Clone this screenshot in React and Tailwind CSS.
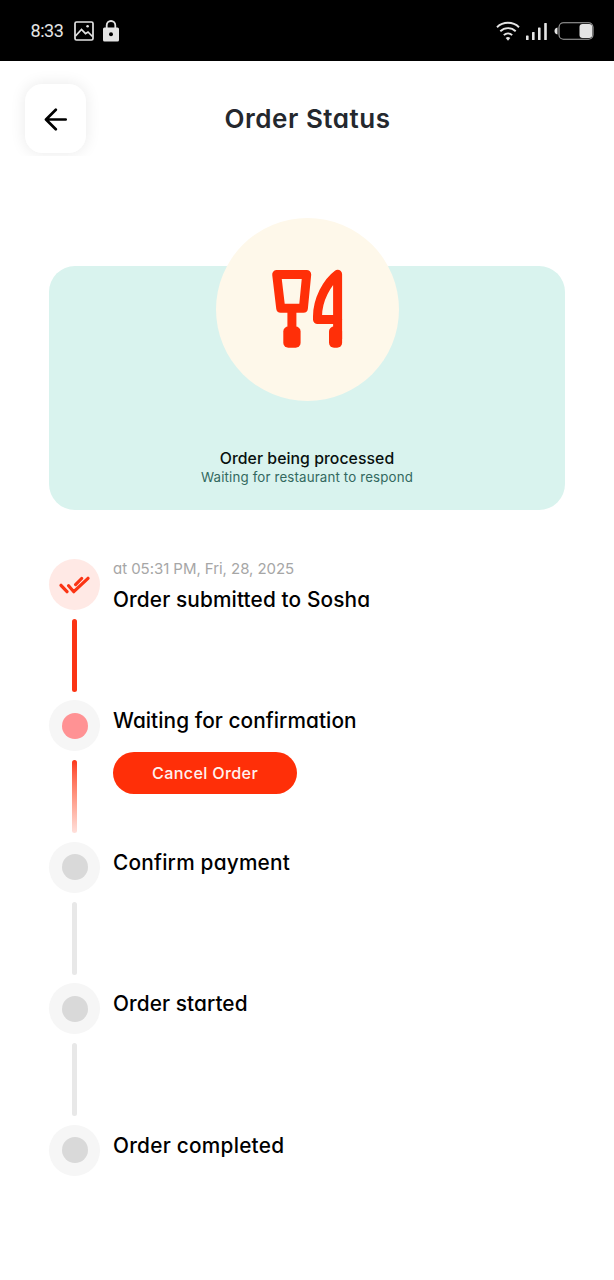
function StatusBar() {
  return (
    <header className="flex h-[61px] items-center justify-between bg-black pl-[30.500px] pr-[20px] text-[#e4e4e4]">
      <div className="flex items-center">
        <span className="w-[43.500px] pt-[1px] font-['Roboto',sans-serif] text-[18px] leading-none tracking-[-0.45px]">8:33</span>
        <svg className="h-[20px] w-[20px]" viewBox="0 0 20 20" fill="none" stroke="currentColor" strokeWidth="1.7">
          <rect x="1" y="1" width="18" height="18" rx="1.5" />
          <path d="M1.5 15 7.5 8.500l4 4.200 2.500-1.700 4.500 4.500" />
          <circle cx="13.6" cy="5.300" r="1.300" fill="currentColor" stroke="none" />
        </svg>
        <svg className="ml-[9px] h-[22px] w-[16px]" viewBox="0 0 16 22">
          <path d="M3.700 9V5.300a4.300 4.300 0 0 1 8.600 0V9" fill="none" stroke="currentColor" strokeWidth="1.800" />
          <rect y="7.600" width="16" height="14" rx="1.500" fill="currentColor" />
          <circle cx="8" cy="14.200" r="2" fill="#000" />
        </svg>
      </div>
      <div className="flex items-center">
        <svg className="h-[20px] w-[24px]" viewBox="0 0 24 20" fill="none" stroke="currentColor" strokeWidth="1.900">
          <path d="M1 6.200a16 16 0 0 1 22 0M4.300 10.300a11 11 0 0 1 15.400 0M7.800 14.100a6.200 6.200 0 0 1 8.400 0" />
          <path d="M9.700 17a3.600 3.600 0 0 1 4.600 0L12 19.800z" fill="currentColor" stroke="none" />
        </svg>
        <svg className="ml-[6px] h-[18px] w-[22px]" viewBox="0 0 22 18" fill="currentColor">
          <rect x="0" y="13.500" width="2.600" height="4.500" rx=".6" />
          <rect x="6" y="10" width="2.600" height="8" rx=".6" />
          <rect x="12" y="5.500" width="2.600" height="12.500" rx=".6" />
          <rect x="18.200" y="1" width="2.600" height="17" rx=".6" />
        </svg>
        <svg className="ml-[6px] h-[18px] w-[40px]" viewBox="0 0 40 18">
          <path d="M3.500 5.500v7C1.300 12.200.5 10.600.5 9s.800-3.200 3-3.500" fill="currentColor" />
          <rect x="5" y=".8" width="34" height="16.400" rx="4.500" fill="none" stroke="#a9a9a9" strokeWidth="1.100" />
          <rect x="25.500" y="2" width="12.700" height="14" rx="3" fill="currentColor" />
        </svg>
      </div>
    </header>
  );
}

function TopBar() {
  return (
    <div className="flex h-[95px] overflow-hidden pl-[25px] pt-[23px]">
      <button aria-label="Back" className="flex h-[69px] w-[61px] items-center justify-center rounded-[17px] bg-white shadow-[0_0_16px_rgba(0,0,0,0.09)]">
        <svg className="h-[24px] w-[24px]" viewBox="0 0 24 24" fill="none" stroke="#000" strokeWidth="2.700" strokeLinecap="round" strokeLinejoin="round">
          <path d="M21.700 12.500H2.200M11.800 2.700 2 12.500l9.800 9.800" />
        </svg>
      </button>
      <h1 className="w-[443px] pt-[19px] text-center text-[26px] leading-[32px] font-semibold tracking-[0.550px] text-[#24282e] [font-feature-settings:'cv11'_1]">Order Status</h1>
    </div>
  );
}

function Cutlery() {
  return (
    <svg className="-mt-[1px] h-[80px] w-[72px]" viewBox="0 0 72 80" fill="none" stroke="#ff2f08" strokeWidth="9" strokeLinejoin="round">
      <path d="M5.700 5.500h30l-3.300 33.800H9.700z" />
      <path d="M20.900 40v20" />
      <rect x="12.300" y="57.500" width="17.300" height="21.300" rx="5" fill="#ff2f08" stroke="none" />
      <path d="M66.600 5.300C56 13 46.500 31 46.500 47.500V50.500H66.600z" />
      <path d="M66.600 50V70" />
      <rect x="58" y="57.500" width="13.100" height="21.300" rx="5" fill="#ff2f08" stroke="none" />
    </svg>
  );
}

function StatusCard() {
  return (
    <section className="mx-[49px] mt-[110px] flex h-[244px] flex-col items-center rounded-[26px] bg-[#d9f3ee]">
      <div className="-mt-[48px] flex h-[183px] w-[183px] shrink-0 items-center justify-center rounded-full bg-[#fef8ea]">
        <Cutlery />
      </div>
      <p className="mt-[48px] text-[15.800px] leading-[20px] font-medium tracking-[0.050px] whitespace-nowrap text-[#08100f]">Order being processed</p>
      <p className="text-[13.300px] leading-[16px] tracking-[0.150px] whitespace-nowrap text-[#33695f]">Waiting for restaurant to respond</p>
    </section>
  );
}

function Marker({ state }) {
  if (state === "done") {
    return (
      <div className="flex h-[51px] w-[51px] items-center justify-center rounded-full bg-[#ffe9e5]">
        <svg className="h-[18px] w-[31px]" viewBox="0 0 31 18" fill="none" stroke="#fb3414" strokeWidth="3.200" strokeLinecap="round" strokeLinejoin="round">
          <path d="M2 9.300l6 6.400M9.600 9.800l5.200 5.900L29 2.300M16.600 8.600l6-6.100" />
        </svg>
      </div>
    );
  }
  return (
    <div className="flex h-[51px] w-[51px] items-center justify-center rounded-full bg-[#f6f6f6]">
      <div className={`h-[26px] w-[26px] rounded-full ${state === "active" ? "bg-[#ff9294]" : "bg-[#d9d9d9]"}`} />
    </div>
  );
}

const LINES = {
  done: "bg-[#fb3414]",
  active: "bg-linear-to-b from-[#fb3414] to-[#ffe0db]",
  pending: "bg-[#e8e8e8]",
};

const STEPS = [
  { label: "Order submitted to Sosha", state: "done", time: "at 05:31 PM, Fri, 28, 2025", spacing: "tracking-[0.130px]" },
  { label: "Waiting for confirmation", state: "active", action: "Cancel Order", spacing: "tracking-[0.070px]" },
  { label: "Confirm payment", state: "pending", spacing: "tracking-[0.220px]" },
  { label: "Order started", state: "pending", spacing: "tracking-[0.080px]" },
  { label: "Order completed", state: "pending", spacing: "tracking-[0.250px]" },
];

function Step({ step, last }) {
  return (
    <li className="flex h-[141.400px] gap-[13px]">
      <div className="flex w-[51px] flex-col items-center">
        <Marker state={step.state} />
        {!last && <div className={`mt-[9px] h-[73px] w-[5.500px] rounded-full ${LINES[step.state]}`} />}
      </div>
      <div className="flex flex-col items-start">
        {step.time && <p className="h-[20px] text-[15px] leading-[20px] tracking-[-0.050px] whitespace-nowrap text-[#a6a6a6]">{step.time}</p>}
        <h2 className={`mt-[7px] text-[20.800px] leading-[28px] font-medium whitespace-nowrap text-black ${step.spacing}`}>{step.label}</h2>
        {step.action && (
          <button className="mt-[17px] h-[42px] w-[184px] rounded-full bg-[#ff2f08] text-[16.200px] font-medium tracking-[0.320px] text-[#fff1ee] [font-feature-settings:'cv11'_0]">{step.action}</button>
        )}
      </div>
    </li>
  );
}

export default function App() {
  return (
    <main className="min-h-[1280px] w-[614px] bg-white font-['Inter','Liberation_Sans',sans-serif]">
      <StatusBar />
      <TopBar />
      <StatusCard />
      <ol className="mt-[49px] pl-[49px] [font-feature-settings:'cv11'_1]">
        {STEPS.map((step, i) => (
          <Step key={step.label} step={step} last={i === STEPS.length - 1} />
        ))}
      </ol>
    </main>
  );
}
